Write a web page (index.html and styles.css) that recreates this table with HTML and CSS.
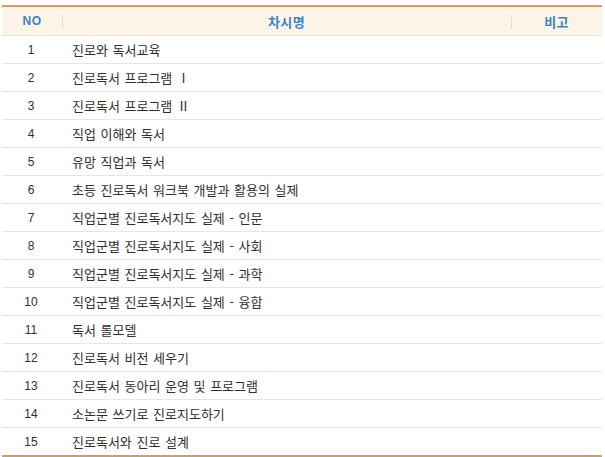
FILE: index.html
```html
<!DOCTYPE html>
<html lang="ko">
<head>
<meta charset="utf-8">
<link rel="stylesheet" href="styles.css">
</head>
<body>
<table class="list">
  <colgroup><col class="c-no"><col class="c-title"><col class="c-note"></colgroup>
  <thead>
    <tr><th class="th-no">NO</th><th class="sep">차시명</th><th class="sep">비고</th></tr>
  </thead>
  <tbody>
    <tr><td class="no">1</td><td class="title">진로와 독서교육</td><td></td></tr>
    <tr><td class="no">2</td><td class="title">진로독서 프로그램 Ⅰ</td><td></td></tr>
    <tr><td class="no">3</td><td class="title">진로독서 프로그램 Ⅱ</td><td></td></tr>
    <tr><td class="no">4</td><td class="title">직업 이해와 독서</td><td></td></tr>
    <tr><td class="no">5</td><td class="title">유망 직업과 독서</td><td></td></tr>
    <tr><td class="no">6</td><td class="title">초등 진로독서 워크북 개발과 활용의 실제</td><td></td></tr>
    <tr><td class="no">7</td><td class="title">직업군별 진로독서지도 실제 - 인문</td><td></td></tr>
    <tr><td class="no">8</td><td class="title">직업군별 진로독서지도 실제 - 사회</td><td></td></tr>
    <tr><td class="no">9</td><td class="title">직업군별 진로독서지도 실제 - 과학</td><td></td></tr>
    <tr><td class="no">10</td><td class="title">직업군별 진로독서지도 실제 - 융합</td><td></td></tr>
    <tr><td class="no">11</td><td class="title">독서 롤모델</td><td></td></tr>
    <tr><td class="no">12</td><td class="title">진로독서 비전 세우기</td><td></td></tr>
    <tr><td class="no">13</td><td class="title">진로독서 동아리 운영 및 프로그램</td><td></td></tr>
    <tr><td class="no">14</td><td class="title">소논문 쓰기로 진로지도하기</td><td></td></tr>
    <tr><td class="no">15</td><td class="title">진로독서와 진로 설계</td><td></td></tr>
  </tbody>
</table>
</body>
</html>
```

FILE: styles.css
```css
html, body {
  margin: 0;
  padding: 0;
  background: #ffffff;
}

body {
  padding: 5px 3px 0 2px;
  font-family: "Noto Sans CJK KR", "Noto Sans", sans-serif;
  font-size: 13px;
  color: #2f2f2f;
}

.list {
  width: 600px;
  border-collapse: collapse;
  table-layout: fixed;
  border-top: 2px solid #d39d63;
  border-bottom: 2px solid #c9a06c;
}

.c-no { width: 60px; }
.c-title { width: 449px; }
.c-note { width: 91px; }

.list th {
  height: 28px;
  padding: 0;
  background: #fdf4e8;
  border-bottom: 1px solid #e6e3df;
  color: #3a84c4;
  font-family: "Noto Sans CJK KR", sans-serif;
  font-size: 13px;
  font-weight: bold;
  text-align: center;
  position: relative;
  letter-spacing: 0.3px;
}

.list th.th-no {
  font-family: "Liberation Sans", sans-serif;
  font-size: 12px;
  letter-spacing: 0.5px;
}

.list th.sep::before {
  content: "";
  position: absolute;
  left: 0;
  top: 8px;
  width: 1px;
  height: 14px;
  background: #cfe3ee;
}

.list td {
  height: 27px;
  padding: 0;
  border-bottom: 1px solid #e6e6e6;
  vertical-align: middle;
}

.list tbody tr:last-child td {
  border-bottom: none;
}

.list td.no {
  text-align: center;
  font-family: "Liberation Sans", sans-serif;
  font-size: 12px;
  padding-right: 2px;
}

.list td.title {
  padding-left: 10px;
  white-space: nowrap;
  word-spacing: 1px;
}
```
